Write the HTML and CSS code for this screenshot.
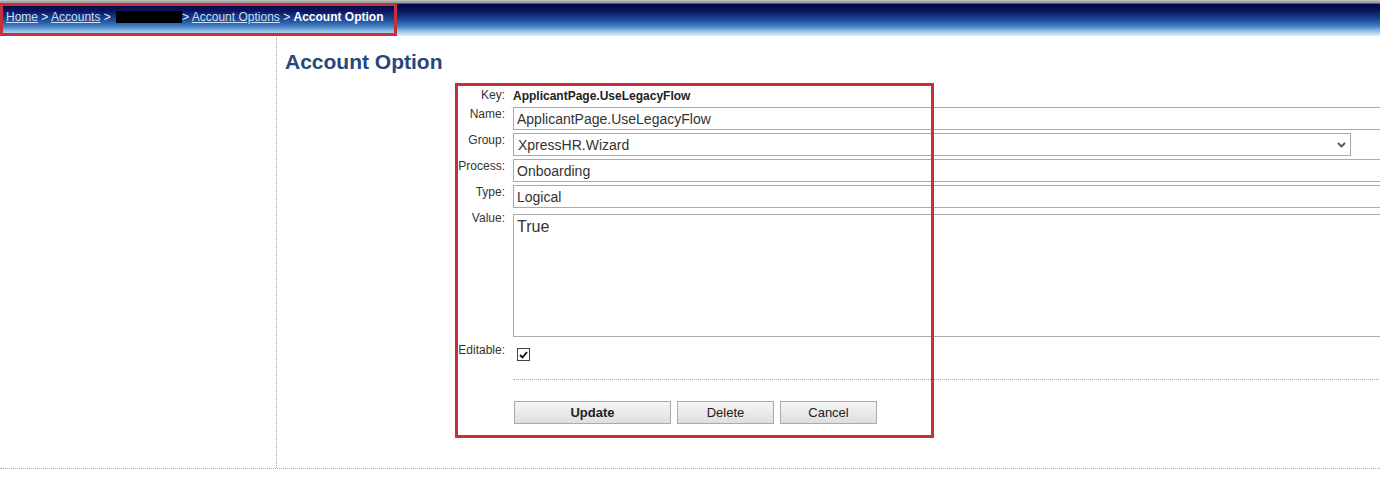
FILE: index.html
```html
<!DOCTYPE html>
<html lang="en">
<head>
    <meta charset="UTF-8">
    <title>Account Option</title>
    <link rel="stylesheet" href="styles.css">
</head>
<body>
    <div class="topbar">
        <div class="breadcrumb">
            <a href="#">Home</a> &gt; <a href="#">Accounts</a> &gt; <span class="redacted"></span>&gt; <a href="#">Account Options</a> &gt; <b>Account Option</b>
        </div>
    </div>

    <div class="page">
        <div class="sidebar"></div>
        <div class="content">
            <h1 class="page-title">Account Option</h1>

            <form class="option-form">
                <div class="form-grid">
                    <label class="lbl">Key:</label>
                    <div class="key-value">ApplicantPage.UseLegacyFlow</div>

                    <label class="lbl" for="name">Name:</label>
                    <input class="field" type="text" id="name" value="ApplicantPage.UseLegacyFlow">

                    <label class="lbl" for="group">Group:</label>
                    <div class="select-wrap">
                        <select class="field select" id="group">
                            <option>XpressHR.Wizard</option>
                        </select>
                        <svg class="chevron" width="9" height="6" viewBox="0 0 9 6"><path d="M1 1 L4.5 4.5 L8 1" fill="none" stroke="#555" stroke-width="1.8"/></svg>
                    </div>

                    <label class="lbl" for="process">Process:</label>
                    <input class="field" type="text" id="process" value="Onboarding">

                    <label class="lbl" for="type">Type:</label>
                    <input class="field" type="text" id="type" value="Logical">

                    <label class="lbl" for="value">Value:</label>
                    <textarea class="field value-box" id="value">True</textarea>

                    <label class="lbl lbl-check">Editable:</label>
                    <div class="check-row">
                        <span class="checkbox">
                            <svg width="9" height="8" viewBox="0 0 9 8"><path d="M1 4 L3.5 6.5 L8 1" fill="none" stroke="#111" stroke-width="1.8"/></svg>
                        </span>
                    </div>
                </div>

                <div class="actions">
                    <button type="button" class="btn btn-update">Update</button>
                    <button type="button" class="btn btn-small">Delete</button>
                    <button type="button" class="btn btn-small">Cancel</button>
                </div>
            </form>
        </div>
    </div>

    <!-- annotation boxes drawn over the screenshot -->
    <div class="mark mark-crumb"></div>
    <div class="mark mark-form"></div>
</body>
</html>
```

FILE: styles.css
```css
html, body {
    overflow: hidden;
}

body {
    margin: 0;
    font-family: "Liberation Sans", Arial, sans-serif;
    font-size: 12px;
    color: #333;
    background-color: #fff;
}

.topbar {
    height: 36px;
    background: linear-gradient(to bottom,
        #dcdcdc 0px, #a0a4a0 1px, #a0a4a0 3px,
        #060646 4px, #0a1660 11px, #1c4d98 20px,
        #3f7cc0 26px, #8fc0e6 31px, #dff1fa 36px);
}

.breadcrumb {
    padding: 10px 0 0 6px;
    line-height: 14px;
    color: #e8f0ff;
}

.breadcrumb a {
    color: #cddcfa;
}

.breadcrumb b {
    color: #fff;
}

.redacted {
    display: inline-block;
    width: 66px;
    height: 12px;
    margin-left: 2px;
    background-color: #000;
    vertical-align: -2px;
}

.page {
    display: flex;
    height: 431px;
    margin-top: 1px;
    border-bottom: 1px dotted #aaa;
}

.sidebar {
    flex-shrink: 0;
    width: 276px;
    border-right: 1px dotted #aaa;
}

.content {
    flex: 1;
    padding: 13px 0 0 8px;
}

.page-title {
    margin: 0;
    font-size: 21px;
    line-height: 24px;
    color: #26477e;
}

.option-form {
    margin: 14px 0 0 163px;
}

.form-grid {
    display: grid;
    grid-template-columns: 57px 880px;
    column-gap: 8px;
    row-gap: 3px;
}

.lbl {
    text-align: right;
    line-height: 14px;
    color: #333;
    white-space: nowrap;
}

.lbl-check {
    padding-top: 3px;
}

.key-value {
    font-weight: bold;
    line-height: 16px;
    color: #222;
}

.field {
    box-sizing: border-box;
    height: 23px;
    width: 880px;
    margin: 0;
    padding: 0 3px;
    border: 1px solid #aaa;
    font-family: "Liberation Sans", Arial, sans-serif;
    font-size: 14px;
    color: #333;
    background-color: #fff;
    outline: none;
}

.select-wrap {
    position: relative;
    width: 838px;
}

.select {
    width: 838px;
    appearance: none;
    -webkit-appearance: none;
    border-radius: 0;
    padding-left: 4px;
}

.chevron {
    position: absolute;
    right: 5px;
    top: 9px;
}

.value-box {
    height: 123px;
    margin-top: 3px;
    padding: 3px;
    font-size: 16px;
    resize: none;
}

.check-row {
    box-sizing: border-box;
    height: 21px;
    padding: 8px 0 0 4px;
}

.checkbox {
    display: flex;
    align-items: center;
    justify-content: center;
    box-sizing: border-box;
    width: 13px;
    height: 13px;
    border: 1px solid #444;
    background-color: #fff;
}

.actions {
    display: flex;
    gap: 6px;
    margin: 18px 0 0 65px;
    padding: 21px 0 0 1px;
    border-top: 1px dotted #aaa;
}

.btn {
    height: 23px;
    padding: 0;
    border: 1px solid #aaa;
    background: linear-gradient(to bottom, #f6f6f6, #dedede);
    font-family: "Liberation Sans", Arial, sans-serif;
    font-size: 13px;
    color: #222;
    cursor: pointer;
}

.btn-update {
    width: 157px;
    font-weight: bold;
}

.btn-small {
    width: 97px;
}

.mark {
    position: absolute;
    border: 3px solid #c5303b;
    box-sizing: border-box;
}

.mark-crumb {
    left: 0;
    top: 3px;
    width: 397px;
    height: 33px;
}

.mark-form {
    left: 455px;
    top: 83px;
    width: 479px;
    height: 355px;
}
```
